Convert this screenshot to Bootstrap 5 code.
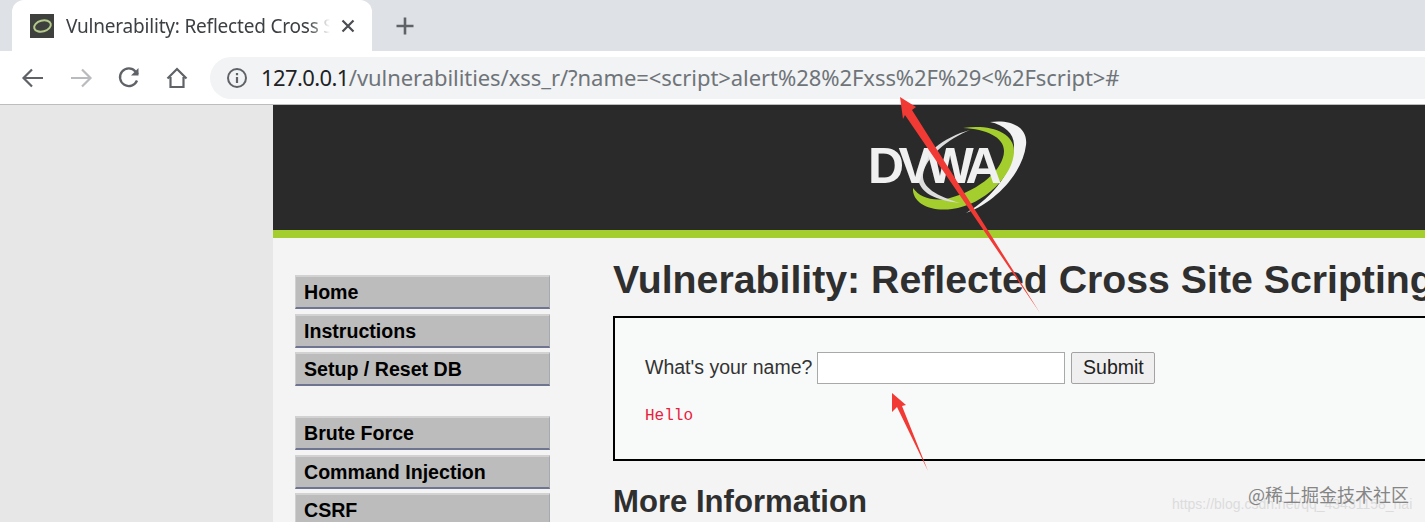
<!DOCTYPE html>
<html lang="en">
<head>
  <meta charset="UTF-8">
  <title>Vulnerability: Reflected Cross Site Scripting</title>
  <meta name="viewport" content="width=device-width, initial-scale=1">
  <link href="https://cdn.jsdelivr.net/npm/bootstrap@5.3.3/dist/css/bootstrap.min.css" rel="stylesheet">
  <style>
    html, body { height: 522px; overflow: hidden; }
    body { position: relative; background: #e7e7e7; font-family: "Liberation Sans", Arial, sans-serif; }
    .tab-strip { height: 51px; background: #dee1e6; padding-left: 12px; }
    .browser-tab { width: 360px; height: 51px; background: #fff; border-radius: 12px 12px 0 0; padding: 0 17px 0 18px; }
    .tab-title { width: 264px; margin-left: 12px; white-space: nowrap; overflow: hidden; font: 19px "Noto Sans", sans-serif; letter-spacing: -.2px; color: #3c4043;
      -webkit-mask-image: linear-gradient(to right, #000 92%, transparent); mask-image: linear-gradient(to right, #000 92%, transparent); }
    .tab-plus { margin-left: 23px; }
    .tool-bar { height: 54px; background: #fff; border-bottom: 1px solid #bdbdbd; padding-left: 21px; }
    .tool-icons { gap: 24px; width: 189px; }
    .url-pill { flex: 1; height: 42px; margin-top: 1px; background: #f1f3f4; border-radius: 21px 0 0 21px; padding-left: 16px; }
    .url-text { margin: 0 0 2px 13px; white-space: nowrap; font: 22px "Noto Sans", sans-serif; letter-spacing: -.06px; color: #6f7479; }
    .url-host { color: #202124; letter-spacing: -.6px; }
    .page-row { height: 417px; }
    .side-gutter { width: 273px; flex: none; }
    .dvwa-page { flex: 1; min-width: 0; background: #f4f4f4; overflow: hidden; }
    .dvwa-header { height: 125px; background: #2a2a2a; padding: 14px 0 0 594px; }
    .dvwa-green { height: 8px; background: #a4ce2d; }
    .dvwa-logo { display: block; }
    .dvwa-body { padding-top: 37px; }
    .menu-col { width: 255px; margin-left: 22px; margin-right: 63px; flex: none; }
    .menu-item { height: 34px; margin-bottom: 4.6px; background: #bcbcbc; padding: 0 8px; line-height: 31px; font-size: 19.6px; font-weight: 700; color: #000;
      border: 2px solid; border-color: #d2d2d2 #a8a8b0 #6f7590 #d0d0d0; border-width: 2px 1.5px 2.5px 1.5px; }
    .menu-gap { height: 25.4px; }
    .main-col { flex: 1; min-width: 0; margin-top: -18px; }
    .main-title { margin: 0; height: 59px; font-size: 39.25px; line-height: 44px; font-weight: 700; color: #2f2f2f; white-space: nowrap; }
    .form-box { height: 145px; margin-right: -10px; border: 2px solid #000; background: #f8f9f9; padding: 34px 30px 0; }
    .name-label { font-size: 19.5px; color: #333; margin-right: 5px; }
    .name-input { width: 248px; height: 32px; background: #fff; border: 1px solid #a9a9a9; }
    .submit-btn { width: 84px; height: 32px; margin-left: 6px; padding: 0; font-size: 19.5px; color: #222; background: #efefef; border: 1px solid #a3a3a3; border-radius: 2px; }
    .hello-text { margin-top: 20px; font: 16px/24px "Liberation Mono", monospace; color: #e8203c; }
    .more-info { margin: 24px 0 0; font-size: 31.1px; line-height: 34px; font-weight: 700; color: #2f2f2f; }
    .marks { position: absolute; left: 0; top: 0; pointer-events: none; }
    .mark-url { position: absolute; left: 1172px; top: 496px; font: 14px "Liberation Sans", sans-serif; color: #dcdcdc; white-space: nowrap; }
    .mark-cn { position: absolute; left: 1248px; top: 481px; font: 18px "Noto Sans CJK SC", sans-serif; color: #858585; white-space: nowrap; }
  </style>
</head>
<body>
  <!-- browser chrome -->
  <div class="tab-strip d-flex align-items-center">
    <div class="browser-tab d-flex align-items-center">
      <svg width="24" height="24" viewBox="0 0 24 24">
        <rect width="24" height="24" fill="#3d403c"/>
        <ellipse cx="12.5" cy="12" rx="8.5" ry="5.5" transform="rotate(-15 12.5 12)" fill="none" stroke="#b4c98a" stroke-width="2"/>
      </svg>
      <div class="tab-title">Vulnerability: Reflected Cross Site Scripting</div>
      <svg class="ms-auto" width="14" height="14" viewBox="0 0 14 14"><path d="M1.5 1.5l11 11M12.5 1.5l-11 11" stroke="#4a4d51" stroke-width="2.2" fill="none"/></svg>
    </div>
    <svg class="tab-plus" width="20" height="20" viewBox="0 0 20 20"><path d="M10 1.5v17M1.500 10h17" stroke="#5f6368" stroke-width="2.6" fill="none"/></svg>
  </div>
  <div class="tool-bar d-flex align-items-center">
    <div class="tool-icons d-flex align-items-center">
      <svg width="24" height="24" viewBox="0 0 24 24"><path d="M22 12H3M11 3.500L2.500 12l8.500 8.500" stroke="#5f6368" stroke-width="2.200" fill="none"/></svg>
      <svg width="24" height="24" viewBox="0 0 24 24"><path d="M2 12h19M13 3.500l8.500 8.500-8.500 8.500" stroke="#b9bbbe" stroke-width="2.200" fill="none"/></svg>
      <svg width="24" height="24" viewBox="0 0 24 24"><path d="M20 14.500A8.800 8.800 0 1 1 18.500 5.500L21 8" stroke="#5f6368" stroke-width="2.300" fill="none"/><path d="M21.500 2v7.500H14z" fill="#5f6368"/></svg>
      <svg width="24" height="24" viewBox="0 0 24 24"><path d="M2.500 12.500L12 3l9.500 9.500M5.500 11v10h13V11" stroke="#5f6368" stroke-width="2.200" fill="none"/></svg>
    </div>
    <div class="url-pill d-flex align-items-center">
      <svg width="22" height="22" viewBox="0 0 22 22"><circle cx="11" cy="11" r="9" stroke="#5f6368" stroke-width="2" fill="none"/><path d="M11 10v6M11 6v2.200" stroke="#5f6368" stroke-width="2.200" fill="none"/></svg>
      <div class="url-text"><span class="url-host">127.0.0.1</span>/vulnerabilities/xss_r/?name=&lt;script&gt;alert%28%2Fxss%2F%29&lt;%2Fscript&gt;#</div>
    </div>
  </div>

  <!-- page -->
  <div class="page-row d-flex">
    <div class="side-gutter"></div>
    <div class="dvwa-page">
      <div class="dvwa-header">
        <svg class="dvwa-logo" width="166" height="97" viewBox="0 0 166 97">
          <path d="M123 3C147 0 161 10 159 26C156 52 131 82 99 94C127 78 147 50 147 26C147 14 137 6 123 3z" fill="#f2f2f2"/>
          <path d="M96 9C121 5 147 12 147 32C147 56 117 86 85 90C63 93 45 84 46 69C53 79 67 83 83 79C113 71 137 50 137 32C137 18 119 10 96 9z" fill="#a4ce2d"/>
          <path d="M103 11C77 18 53 36 51 56C50 70 63 81 93 84C69 77 55 68 56 56C58 38 81 20 103 11z" fill="#dcdcdc"/>
          <text x="1" y="64" font-family="Liberation Sans, sans-serif" font-weight="700" font-size="50" letter-spacing="-5.5" fill="#f0f0f0">DVWA</text>
        </svg>
      </div>
      <div class="dvwa-green"></div>
      <div class="dvwa-body d-flex">
        <div class="menu-col">
          <div class="menu-item">Home</div>
          <div class="menu-item">Instructions</div>
          <div class="menu-item">Setup / Reset DB</div>
          <div class="menu-gap"></div>
          <div class="menu-item">Brute Force</div>
          <div class="menu-item">Command Injection</div>
          <div class="menu-item">CSRF</div>
        </div>
        <div class="main-col">
          <h1 class="main-title">Vulnerability: Reflected Cross Site Scripting (XSS)</h1>
          <div class="form-box">
            <div class="d-flex align-items-center">
              <span class="name-label">What's your name?</span>
              <div class="name-input"></div>
              <button class="submit-btn" type="button">Submit</button>
            </div>
            <div class="hello-text">Hello</div>
          </div>
          <h2 class="more-info">More Information</h2>
        </div>
      </div>
    </div>
  </div>

  <!-- annotations over the screenshot -->
  <svg class="marks" width="1425" height="522" viewBox="0 0 1425 522">
    <polygon points="900,97 916,107 912,110 1040,313 905,115 903,119" fill="#f23a35"/>
    <polygon points="892,393 906,405 902,406 928,471 897,407 892,412" fill="#f23a35"/>
  </svg>
  <div class="mark-url">https://blog.csdn.net/qq_43431158_hai</div>
  <div class="mark-cn">@稀土掘金技术社区</div>
</body>
</html>
